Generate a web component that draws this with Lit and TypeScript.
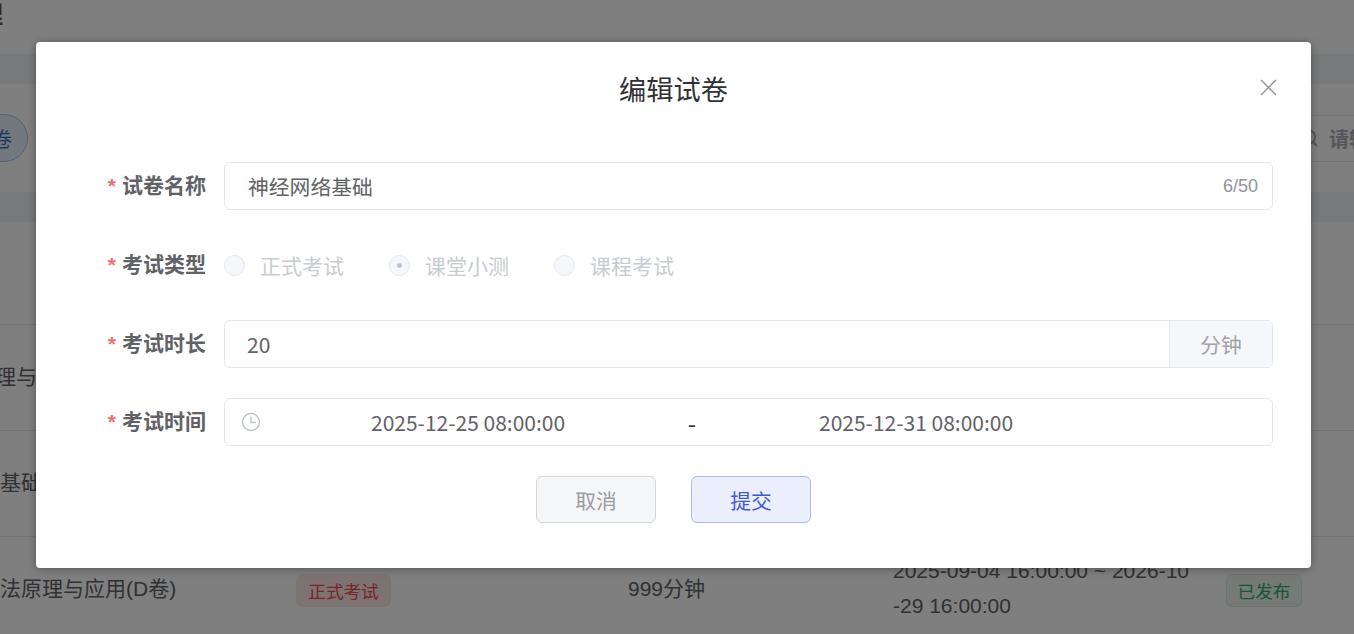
import { LitElement, html, css } from "lit";
import { customElement } from "lit/decorators.js";

@customElement("app-root")
export class AppRoot extends LitElement {
  static styles = css`
    :host { display: block; width: 1354px; height: 634px; overflow: hidden; position: relative; font-family: "Liberation Sans", "Noto Sans CJK SC", sans-serif; color: #303133; }
    * { box-sizing: border-box; }
    .page { width: 1354px; height: 634px; background: #fff; display: flex; flex-direction: column; overflow: hidden; }
    .top { height: 54px; flex: none; font-size: 24px; line-height: 30px; color: #6b4a2a; }
    .top span { display: block; margin-left: -21px; font-weight: 700; }
    .band { height: 30px; flex: none; background: #f0f2f5; }
    .tools { height: 108px; flex: none; display: flex; align-items: center; justify-content: space-between; }
    .pill { width: 68px; height: 48px; margin-left: -40px; border: 1px solid #a3c4f3; border-radius: 24px; background: #e6effc; color: #3a6fb8; font-size: 20px; display: flex; align-items: center; justify-content: flex-end; padding-right: 15px; white-space: nowrap; }
    .search { width: 300px; height: 47px; border: 1px solid #e4e7ed; border-right: 0; display: flex; align-items: center; gap: 10px; padding-left: 2px; margin-right: -242px; color: #a8abb2; font-size: 20px; font-weight: 700; white-space: nowrap; }
    .thead { height: 103px; flex: none; border-bottom: 1px solid #e4e7ed; }
    .row { height: 106px; flex: none; border-bottom: 1px solid #e4e7ed; display: grid; grid-template-columns: 176px 120px 95px 237px 265px 333px 76px; align-items: center; font-size: 21px; color: #606266; }
    .name { white-space: nowrap; padding-bottom: 5px; }
    .m1 { margin-left: -26px; }
    .m2 { margin-left: -84px; }
    .m3 { margin-left: -21px; }
    .tag { height: 33px; margin-top: 1px; border-radius: 6px; font-size: 17.6px; display: flex; align-items: center; justify-content: center; white-space: nowrap; }
    .tag.red { grid-column: 3; background: #fbe6e4; color: #f04a4a; }
    .dur { grid-column: 5; white-space: nowrap; padding-bottom: 5px; }
    .range { grid-column: 6; line-height: 35px; width: 300px; word-break: break-all; padding-bottom: 4px; }
    .tag.green { grid-column: 7; background: #eaf4ef; border: 1px solid #d6e8e0; color: #2aaa68; }

    .mask { position: absolute; inset: 0; background: rgba(0, 0, 0, 0.5); }
    .dialog { position: absolute; left: 36px; top: 42px; width: 1275px; height: 526px; background: #fff; border-radius: 4px; box-shadow: 0 1px 8px rgba(0, 0, 0, 0.35); display: flex; flex-direction: column; padding-top: 120px; }
    .head { position: absolute; left: 0; right: 0; top: 29px; text-align: center; font-size: 27.2px; line-height: 40px; color: #303133; }
    .close { position: absolute; top: 37px; left: 1224px; width: 17px; height: 17px; color: #909399; }
    .form { display: flex; flex-direction: column; padding: 0 38px 0 66px; }
    .item { display: flex; align-items: center; height: 48px; }
    .item.gap1 { margin-bottom: 31px; }
    .item.gap2 { margin-bottom: 30px; }
    label { width: 122px; flex: none; padding: 0 18px 0 0; text-align: right; font-size: 21px; font-weight: 700; color: #606266; white-space: nowrap; line-height: 24px; }
    label i { font-style: normal; font-weight: 700; color: #f56c6c; margin-right: 6px; }
    .field { flex: 1; height: 48px; border: 1px solid #e4e7ed; border-radius: 6px; display: flex; align-items: center; background: #fff; font-family: "Noto Sans CJK SC", sans-serif; color: #606266; font-size: 20.8px; }
    .text { padding-left: 23px; flex: 1; }
    .text.num { padding-left: 22px; font-size: 21px; }
    .count { padding-right: 14px; font-family: "Liberation Sans", sans-serif; font-size: 18px; color: #909399; }
    .append { width: 103px; height: 100%; flex: none; background: #f5f7fa; border-left: 1px solid #e4e7ed; border-radius: 0 6px 6px 0; color: #a0a2a6; display: flex; align-items: center; justify-content: center; }
    .radios { display: flex; align-items: center; gap: 45px; font-family: "Noto Sans CJK SC", sans-serif; font-size: 21px; color: #c8cbd2; }
    .radio { display: flex; align-items: center; gap: 15px; }
    .dot { width: 21px; height: 21px; border-radius: 50%; background: #f5f7fa; border: 1px solid #e4e7ed; display: flex; align-items: center; justify-content: center; }
    .dot.on::after { content: ""; width: 5px; height: 5px; border-radius: 50%; background: #c0c4cc; }
    .clock { width: 20px; height: 20px; flex: none; margin-left: 16px; color: #c0c4cc; }
    .date { width: 194px; text-align: center; white-space: nowrap; font-size: 21px; }
    .date.a { margin-left: 110px; }
    .sep { width: 254px; text-align: center; color: #303133; font-size: 24px; }
    .actions { display: flex; justify-content: center; gap: 35px; margin-top: 30px; }
    button { width: 120px; height: 47px; border-radius: 6px; font: 20.8px "Liberation Sans", "Noto Sans CJK SC", sans-serif; padding: 0; }
    .cancel { background: #f5f6f8; border: 1px solid #d4d6da; color: #9a9ca0; }
    .submit { background: #ebeefc; border: 1px solid #a9b8f8; color: #3b5bdb; }
  `;

  render() {
    return html`
      <div class="page">
        <div class="top"><span>理</span></div>
        <div class="band"></div>
        <div class="tools">
          <div class="pill">试卷</div>
          <div class="search">
            <svg width="20" height="20" viewBox="0 0 20 20" fill="none" stroke="currentColor" stroke-width="2"><circle cx="9" cy="9" r="7"></circle><path d="M14 14l4 4"></path></svg>
            <span>请输入</span>
          </div>
        </div>
        <div class="band"></div>
        <div class="thead"></div>
        <div class="row"><div class="name m1">原理与应用</div></div>
        <div class="row"><div class="name m2">神经网络基础</div></div>
        <div class="row">
          <div class="name m3">算法原理与应用(D卷)</div>
          <div class="tag red">正式考试</div>
          <div class="dur">999分钟</div>
          <div class="range">2025-09-04 16:00:00 ~ 2026-10-29 16:00:00</div>
          <div class="tag green">已发布</div>
        </div>
      </div>
      <div class="mask"></div>
      <div class="dialog">
        <div class="head">编辑试卷</div>
        <svg class="close" viewBox="0 0 17 17" fill="none" stroke="currentColor" stroke-width="1.4"><path d="M1 1l15 15M16 1L1 16"></path></svg>
        <div class="form">
          <div class="item gap1">
            <label><i>*</i>试卷名称</label>
            <div class="field"><span class="text">神经网络基础</span><span class="count">6/50</span></div>
          </div>
          <div class="item gap1">
            <label><i>*</i>考试类型</label>
            <div class="radios">
              <div class="radio"><span class="dot"></span>正式考试</div>
              <div class="radio"><span class="dot on"></span>课堂小测</div>
              <div class="radio"><span class="dot"></span>课程考试</div>
            </div>
          </div>
          <div class="item gap2">
            <label><i>*</i>考试时长</label>
            <div class="field"><span class="text num">20</span><span class="append">分钟</span></div>
          </div>
          <div class="item">
            <label><i>*</i>考试时间</label>
            <div class="field">
              <svg class="clock" viewBox="0 0 20 20" fill="none" stroke="currentColor" stroke-width="1.5"><circle cx="10" cy="10" r="8.5"></circle><path d="M10 4.5V10.5H15"></path></svg>
              <span class="date a">2025-12-25 08:00:00</span>
              <span class="sep">-</span>
              <span class="date">2025-12-31 08:00:00</span>
            </div>
          </div>
        </div>
        <div class="actions">
          <button class="cancel">取消</button>
          <button class="submit">提交</button>
        </div>
      </div>
    `;
  }
}
